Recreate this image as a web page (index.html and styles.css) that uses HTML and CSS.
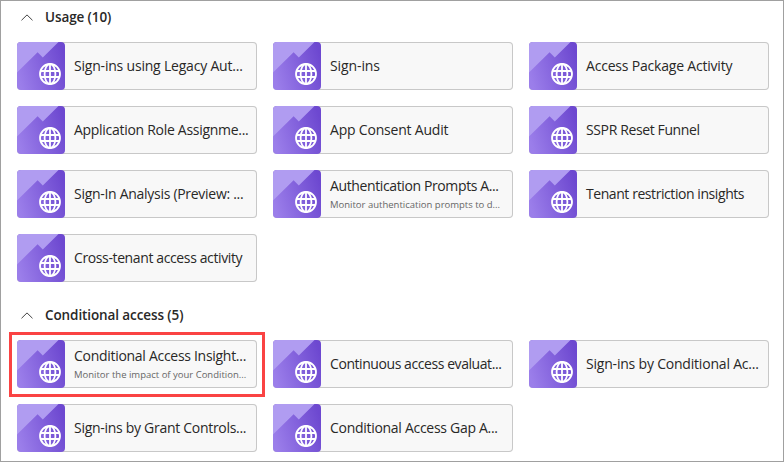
FILE: index.html
```
<!DOCTYPE html>
<html lang="en">
<head>
<meta charset="utf-8">
<title>Workbooks</title>
<link rel="stylesheet" href="styles.css">
</head>
<body>
<svg class="defs" width="0" height="0" aria-hidden="true">
  <defs>
    <linearGradient id="tile" x1="0" y1="0.65" x2="1" y2="0.35">
      <stop offset="0" stop-color="#9b7eea"/>
      <stop offset="1" stop-color="#6d48d0"/>
    </linearGradient>
    <symbol id="workbook" viewBox="0 0 48 48">
      <rect width="48" height="48" fill="url(#tile)"/>
      <path d="M0 0H41.5L25.8 15.5L20.6 10.2L0 30.5Z" fill="#b09cf1"/>
      <g fill="none" stroke="#fff" stroke-width="1.8">
        <circle cx="33" cy="32" r="10"/>
        <ellipse cx="33" cy="32" rx="5.4" ry="10"/>
        <path d="M33 22V42"/>
        <path d="M23.8 29H42.2M23.8 35H42.2" stroke-width="2.1"/>
      </g>
    </symbol>
    <symbol id="chevron" viewBox="0 0 12 7">
      <path d="M0.5 6.3L6 0.9L11.5 6.3" fill="none" stroke="#444" stroke-width="1"/>
    </symbol>
  </defs>
</svg>
<main class="gallery">
  <section class="group">
    <h2 class="heading"><svg class="chevron"><use href="#chevron"/></svg><span>Usage (10)</span></h2>
    <div class="cards">
      <article class="card"><svg class="icon"><use href="#workbook"/></svg><div class="text"><div class="title">Sign-ins using Legacy Aut...</div></div></article>
      <article class="card"><svg class="icon"><use href="#workbook"/></svg><div class="text"><div class="title loose">Sign-ins</div></div></article>
      <article class="card"><svg class="icon"><use href="#workbook"/></svg><div class="text"><div class="title">Access Package Activity</div></div></article>
      <article class="card"><svg class="icon"><use href="#workbook"/></svg><div class="text"><div class="title snug">Application Role Assignme...</div></div></article>
      <article class="card"><svg class="icon"><use href="#workbook"/></svg><div class="text"><div class="title">App Consent Audit</div></div></article>
      <article class="card"><svg class="icon"><use href="#workbook"/></svg><div class="text"><div class="title tight">SSPR Reset Funnel</div></div></article>
      <article class="card"><svg class="icon"><use href="#workbook"/></svg><div class="text"><div class="title snug">Sign-In Analysis (Preview: ...</div></div></article>
      <article class="card"><svg class="icon"><use href="#workbook"/></svg><div class="text"><div class="title tight">Authentication Prompts A...</div><div class="note">Monitor authentication prompts to d...</div></div></article>
      <article class="card"><svg class="icon"><use href="#workbook"/></svg><div class="text"><div class="title tighter">Tenant restriction insights</div></div></article>
      <article class="card"><svg class="icon"><use href="#workbook"/></svg><div class="text"><div class="title tight">Cross-tenant access activity</div></div></article>
    </div>
  </section>
  <section class="group">
    <h2 class="heading"><svg class="chevron"><use href="#chevron"/></svg><span>Conditional access (5)</span></h2>
    <div class="cards">
      <article class="card marked"><svg class="icon"><use href="#workbook"/></svg><div class="text"><div class="title snug">Conditional Access Insight...</div><div class="note">Monitor the impact of your Condition...</div></div></article>
      <article class="card"><svg class="icon"><use href="#workbook"/></svg><div class="text"><div class="title tighter">Continuous access evaluat...</div></div></article>
      <article class="card"><svg class="icon"><use href="#workbook"/></svg><div class="text"><div class="title">Sign-ins by Conditional Ac...</div></div></article>
      <article class="card"><svg class="icon"><use href="#workbook"/></svg><div class="text"><div class="title snug">Sign-ins by Grant Controls...</div></div></article>
      <article class="card"><svg class="icon"><use href="#workbook"/></svg><div class="text"><div class="title snug">Conditional Access Gap A...</div></div></article>
    </div>
  </section>
</main>
</body>
</html>
```
FILE: styles.css
```
* { box-sizing: border-box; }

body {
  margin: 0;
  background: #fff;
  color: #292827;
  font-family: "Open Sans", "Noto Sans", sans-serif;
}

.defs { position: absolute; }

.gallery {
  height: 462px;
  padding: 6px 14px 0 16px;
  border: 1px solid #a0a0a0;
  overflow: hidden;
}

.group + .group { margin-top: 23px; }

.heading {
  display: flex;
  align-items: center;
  height: 20px;
  margin: 0 0 15px;
  padding-left: 4px;
  font-size: 13.5px;
  font-weight: 600;
  line-height: 20px;
  letter-spacing: -0.1px;
}

.chevron {
  width: 12px;
  height: 7px;
  margin-right: 12px;
}

.cards {
  display: grid;
  grid-template-columns: repeat(3, 240px);
  grid-auto-rows: 48px;
  gap: 16px;
}

.card {
  position: relative;
  display: flex;
  border-radius: 4px;
  background: #f8f8f8;
  box-shadow: inset 0 0 0 1px #c8c8c8;
}

.icon {
  flex: none;
  width: 48px;
  height: 48px;
  border-radius: 4px;
}

.text {
  display: flex;
  flex-direction: column;
  justify-content: center;
  padding-left: 9px;
  white-space: nowrap;
}

.title {
  font-size: 14px;
  line-height: 20px;
  letter-spacing: -0.2px;
}

.title.loose { letter-spacing: -0.1px; }
.title.snug { letter-spacing: -0.29px; }
.title.tight { letter-spacing: -0.38px; }
.title.tighter { letter-spacing: -0.43px; }

.note {
  height: 16px;
  color: #666;
  font-size: 9.5px;
  line-height: 17px;
}

.marked::after {
  content: "";
  position: absolute;
  inset: -8px -8px -9px;
  border: 3px solid #fa4343;
}
```
